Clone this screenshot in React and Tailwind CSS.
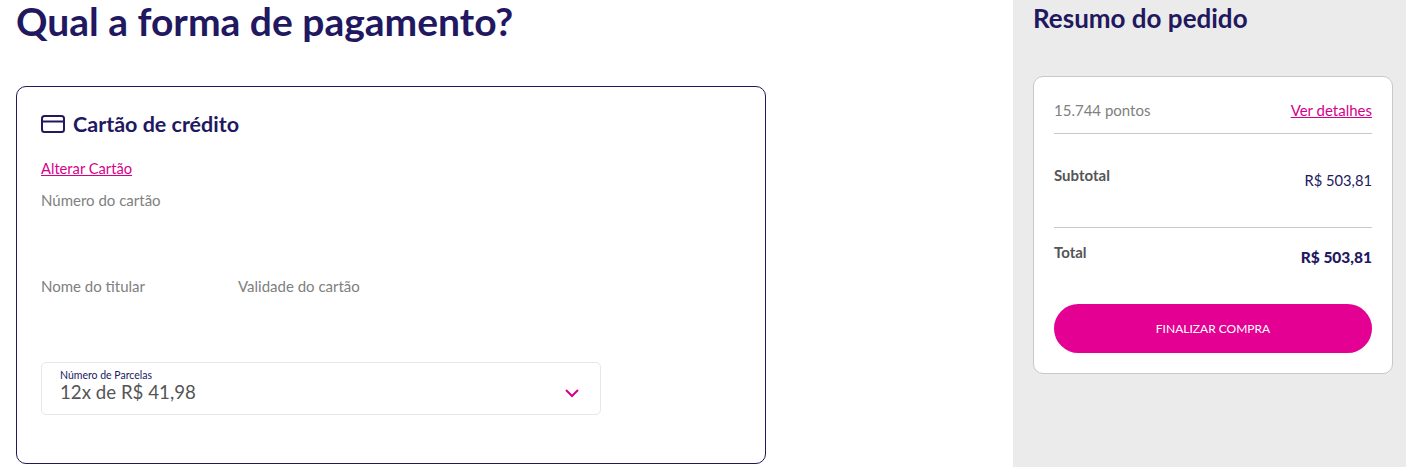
export default function App() {
  return (
    <div className="flex h-[467px] w-[1406px] overflow-hidden bg-white font-['Lato',sans-serif]">
      {/* Payment column */}
      <div className="w-[1013px] shrink-0 pl-4">
        <h1 className="h-[86px] text-[39px] leading-[42px] font-bold text-[#21185f]">Qual a forma de pagamento?</h1>
        <div className="h-[378px] w-[750px] rounded-[10px] border border-[#21185f] px-6 pt-[24px]">
          <div className="flex h-[26px] items-center gap-[8px]">
            <svg width="24" height="18" viewBox="0 0 24 18" fill="none" stroke="#21185f" strokeWidth="2">
              <rect x="1" y="1" width="22" height="16" rx="2.5" />
              <path d="M1 6.5h22" />
            </svg>
            <h2 className="text-[21.5px] leading-[26px] font-bold text-[#21185f]">Cartão de crédito</h2>
          </div>
          <a className="mt-[22px] block text-[14.7px] leading-[18px] text-[#d6008c] underline">Alterar Cartão</a>
          <p className="mt-[14px] text-[15px] leading-[18px] text-[#808080]">Número do cartão</p>
          <div className="mt-[68px] flex text-[15px] leading-[18px] text-[#808080]">
            <span className="w-[197px]">Nome do titular</span>
            <span>Validade do cartão</span>
          </div>
          <div className="mt-[67px] flex h-[53px] w-[560px] justify-between rounded-[5px] border border-[#e8e8e8] pt-[6px] pr-[20px] pl-[18px]">
            <div>
              <p className="text-[10.5px] leading-[12px] text-[#21185f]">Número de Parcelas</p>
              <p className="text-[18.7px] leading-[22px] text-[#555555]">12x de R$ 41,98</p>
            </div>
            <svg className="mt-[19px]" width="16" height="10" viewBox="0 0 16 10" fill="none" stroke="#d6008c" strokeWidth="2">
              <path d="M2 2l6 6 6-6" />
            </svg>
          </div>
        </div>
      </div>

      {/* Order summary */}
      <div className="flex-1 bg-[#ebebeb] pl-[20px]">
        <h2 className="h-[76px] pt-[2px] text-[26px] leading-[32px] font-bold text-[#21185f]">Resumo do pedido</h2>
        <div className="h-[298px] w-[360px] rounded-[10px] border border-[#c8c8c8] bg-white px-5 pt-[23px]">
          <div className="flex h-[33px] items-start justify-between text-[15px] leading-[20px]">
            <span className="text-[#808080]">15.744 pontos</span>
            <a className="text-[#d6008c] underline">Ver detalhes</a>
          </div>
          <div className="h-[94px] border-t border-[#c8c8c8] pt-[32px]">
            <div className="flex justify-between">
              <span className="text-[15px] leading-[18px] font-bold text-[#555555]">Subtotal</span>
              <span className="mt-[5px] text-[14.7px] leading-[18px] text-[#21185f]">R$ 503,81</span>
            </div>
          </div>
          <div className="h-[77px] border-t border-[#c8c8c8] pt-[15px]">
            <div className="flex justify-between">
              <span className="text-[15px] leading-[18px] font-bold text-[#555555]">Total</span>
              <span className="mt-[5px] text-[15.5px] leading-[18px] font-black text-[#21185f]">R$ 503,81</span>
            </div>
          </div>
          <button className="h-[49px] w-full rounded-full bg-[#e30092] text-[12px] text-white">FINALIZAR COMPRA</button>
        </div>
      </div>
    </div>
  );
}
